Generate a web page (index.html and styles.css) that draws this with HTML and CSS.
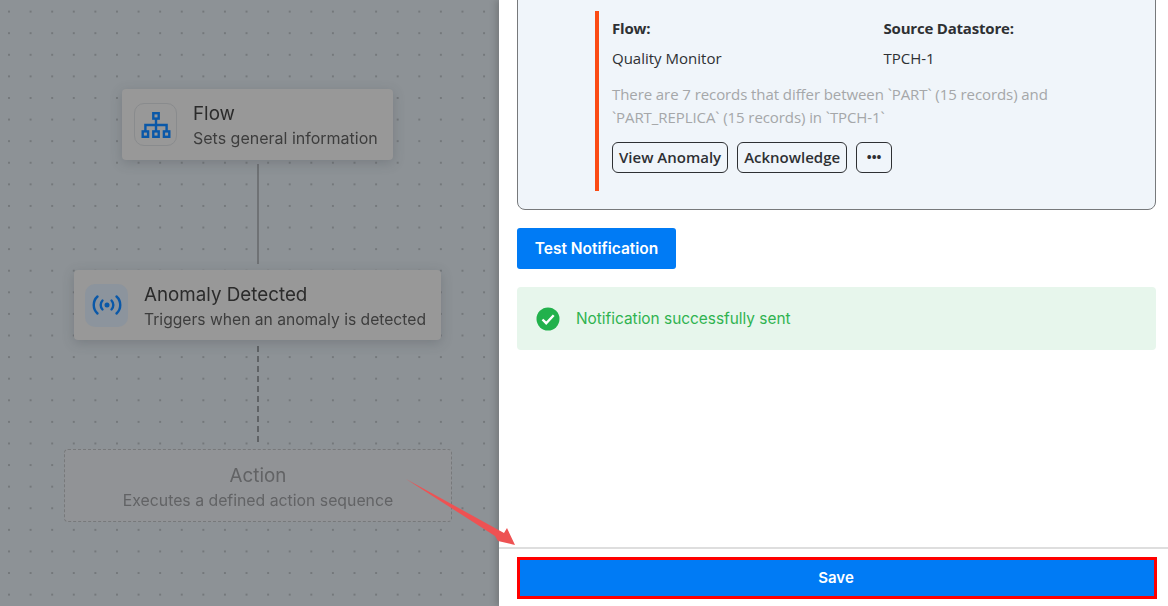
FILE: index.html
```html
<!DOCTYPE html>
<html lang="en">
<head>
    <meta charset="UTF-8">
    <meta name="viewport" content="width=device-width, initial-scale=1.0">
    <title>Flow Notification</title>
    <link rel="stylesheet" href="styles.css">
</head>
<body>
    <div class="page">
        <div class="canvas">
            <div class="edge edge-solid edge-top"></div>
            <div class="edge edge-dashed edge-bottom"></div>

            <div class="node node-flow">
                <div class="node-icon icon-outline">
                    <svg width="30" height="30" viewBox="0 0 30 30" fill="none" stroke="#0a58a8" stroke-width="2.400">
                        <rect x="12.300" y="3.200" width="5.400" height="5.400"/>
                        <rect x="1.700" y="21.400" width="5.400" height="5.400"/>
                        <rect x="12.300" y="21.400" width="5.400" height="5.400"/>
                        <rect x="22.900" y="21.400" width="5.400" height="5.400"/>
                        <path d="M15 8.600v12.800M4.400 21.400V15h21.200v6.400"/>
                    </svg>
                </div>
                <div class="node-text">
                    <div class="node-title">Flow</div>
                    <div class="node-sub">Sets general information</div>
                </div>
            </div>

            <div class="node node-anomaly">
                <div class="node-icon icon-filled">
                    <svg width="30" height="30" viewBox="0 0 30 30" fill="none" stroke="#0a58a8" stroke-width="2.400" stroke-linecap="round">
                        <circle cx="15" cy="15" r="2.500" fill="#0a58a8" stroke="none"/>
                        <path d="M10.500 10.500a6.500 6.500 0 0 0 0 9M19.500 10.500a6.500 6.500 0 0 1 0 9"/>
                        <path d="M5.500 6.500a11.500 11.500 0 0 0 0 17M24.500 6.500a11.500 11.500 0 0 1 0 17"/>
                    </svg>
                </div>
                <div class="node-text">
                    <div class="node-title">Anomaly Detected</div>
                    <div class="node-sub">Triggers when an anomaly is detected</div>
                </div>
            </div>

            <div class="node node-action">
                <div class="node-text">
                    <div class="node-title">Action</div>
                    <div class="node-sub">Executes a defined action sequence</div>
                </div>
            </div>
        </div>

        <div class="panel">
            <div class="panel-body">
                <div class="preview-card">
                    <div class="message">
                        <div class="fields">
                            <div>
                                <div class="field-label">Flow:</div>
                                <div class="field-value">Quality Monitor</div>
                            </div>
                            <div>
                                <div class="field-label">Source Datastore:</div>
                                <div class="field-value">TPCH-1</div>
                            </div>
                        </div>
                        <p class="message-text">There are 7 records that differ between `PART` (15 records) and `PART_REPLICA` (15 records) in `TPCH-1`</p>
                        <div class="message-actions">
                            <button class="chip">View Anomaly</button>
                            <button class="chip">Acknowledge</button>
                            <button class="chip chip-more">•••</button>
                        </div>
                    </div>
                </div>

                <button class="test-btn">Test Notification</button>

                <div class="alert">
                    <svg width="24" height="24" viewBox="0 0 24 24">
                        <circle cx="12" cy="12" r="11.500" fill="#22b14c"/>
                        <path d="M6.500 12.500l3.700 3.700 7.500-8" fill="none" stroke="#fff" stroke-width="2.400"/>
                    </svg>
                    <span>Notification successfully sent</span>
                </div>
            </div>

            <div class="panel-footer">
                <button class="save-btn">Save</button>
            </div>
        </div>

        <svg class="arrow" width="120" height="75" viewBox="0 0 120 75">
            <polygon points="1,1 99,55 102,50 110,67 93,63 90,58" fill="#ee5253"/>
        </svg>
    </div>
</body>
</html>
```

FILE: styles.css
```css
* {
    box-sizing: border-box;
    margin: 0;
    padding: 0;
}
body {
    font-family: Inter, Arial, sans-serif;
    background: #fff;
}
.page {
    position: relative;
    display: flex;
    width: 1168px;
    height: 606px;
    overflow: hidden;
}

/* left side, dimmed flow canvas */
.canvas {
    position: relative;
    width: 499px;
    flex-shrink: 0;
    background-color: #8d9296;
    background-image: radial-gradient(circle, #74787b 0.8px, transparent 1.1px);
    background-size: 21.6px 21.6px;
    background-position: -1.800px 0.800px;
    filter: blur(0.4px);
}
.node {
    position: absolute;
    display: flex;
    align-items: center;
    gap: 16px;
    padding: 0 11px;
    background: #989898;
    border-radius: 4px;
    box-shadow: 0 3px 12px rgba(60, 65, 70, 0.25);
    color: #2b2b2b;
}
.node-flow {
    left: 122px;
    top: 89px;
    width: 271px;
    height: 71px;
    padding-left: 12px;
}
.node-flow .node-sub {
    font-size: 16px;
}
.node-anomaly {
    left: 74px;
    top: 270px;
    width: 367px;
    height: 70px;
}
.node-anomaly .node-sub {
    font-size: 15.650px;
}
.node-action {
    left: 64px;
    top: 449px;
    width: 388px;
    height: 73px;
    justify-content: center;
    text-align: center;
    background: #919396;
    border: 1px dashed #77797b;
    box-shadow: none;
    color: #626365;
}
.node-icon {
    display: flex;
    align-items: center;
    justify-content: center;
    width: 43px;
    height: 43px;
    border-radius: 10px;
    flex-shrink: 0;
}
.icon-outline {
    border: 1px solid #898b8d;
}
.icon-filled {
    background: #8c949d;
}
.node-text {
    padding-top: 3px;
}
.node-action .node-text {
    padding-top: 4px;
}
.node-title {
    font-size: 18.800px;
    line-height: 25px;
}
.node-sub {
    font-size: 15.800px;
    line-height: 25px;
    color: #3d3d3d;
}
.node-action .node-sub {
    color: #626365;
}
.edge {
    position: absolute;
    left: 257px;
    width: 2px;
}
.edge-solid {
    background: #6f7275;
}
.edge-top {
    top: 164px;
    height: 100px;
}
.edge-dashed {
    background: repeating-linear-gradient(#5f6265 0 6px, transparent 6px 10px);
}
.edge-bottom {
    top: 346px;
    height: 100px;
}

/* right side panel */
.panel {
    display: flex;
    flex-direction: column;
    flex: 1;
    background: #fff;
    box-shadow: -3px 0 6px rgba(50, 50, 50, 0.25);
    z-index: 1;
}
.panel-body {
    flex: 1;
    padding: 0 12px 0 18px;
}
.preview-card {
    height: 240px;
    margin-top: -30px;
    padding: 40px 0 0 77px;
    background: #f0f5fa;
    border: 1px solid #77797b;
    border-radius: 8px;
}
.message {
    height: 180px;
    padding: 5px 16px 0 13px;
    border-left: 4px solid #fb4b14;
    font-family: "Open Sans", Arial, sans-serif;
    font-size: 15px;
    color: #2e3033;
}
.fields {
    display: grid;
    grid-template-columns: 271.500px 1fr;
}
.field-label {
    font-weight: 700;
    line-height: 24px;
    letter-spacing: -0.2px;
}
.field-value {
    margin-top: 6px;
    line-height: 24px;
}
.message-text {
    margin-top: 13px;
    width: 470px;
    line-height: 23px;
    letter-spacing: -0.08px;
    color: #a5a7a9;
}
.message-actions {
    display: flex;
    gap: 9px;
    margin-top: 13px;
}
.chip {
    height: 31px;
    padding: 0 6px 2px;
    background: transparent;
    border: 1px solid #2e3033;
    border-radius: 6px;
    font-family: "Open Sans", Arial, sans-serif;
    font-size: 15px;
    font-weight: 600;
    color: #2e3033;
}
.chip-more {
    width: 36px;
    padding: 0 0 2px;
    font-size: 13px;
    font-weight: 700;
}
.test-btn {
    display: block;
    width: 159px;
    height: 41px;
    margin-top: 18px;
    background: #007bf5;
    border: none;
    border-radius: 3px;
    font-family: Inter, Arial, sans-serif;
    font-size: 15.500px;
    font-weight: 600;
    color: #fff;
}
.alert {
    display: flex;
    align-items: center;
    gap: 16px;
    height: 63px;
    margin-top: 18px;
    padding-left: 19px;
    background: #e7f6ec;
    border-radius: 4px;
    font-size: 15.400px;
    color: #2fb350;
}
.panel-footer {
    height: 59px;
    padding: 8px 11px 0 18px;
    border-top: 2px solid #dedede;
}
.save-btn {
    display: block;
    width: 640px;
    height: 42px;
    padding: 0 2px 1px 0;
    background: #007bf5;
    border: 3px solid #ff0000;
    font-family: Inter, Arial, sans-serif;
    font-size: 15px;
    font-weight: 600;
    color: #fff;
}
.arrow {
    position: absolute;
    left: 405px;
    top: 478px;
    z-index: 2;
}
```
